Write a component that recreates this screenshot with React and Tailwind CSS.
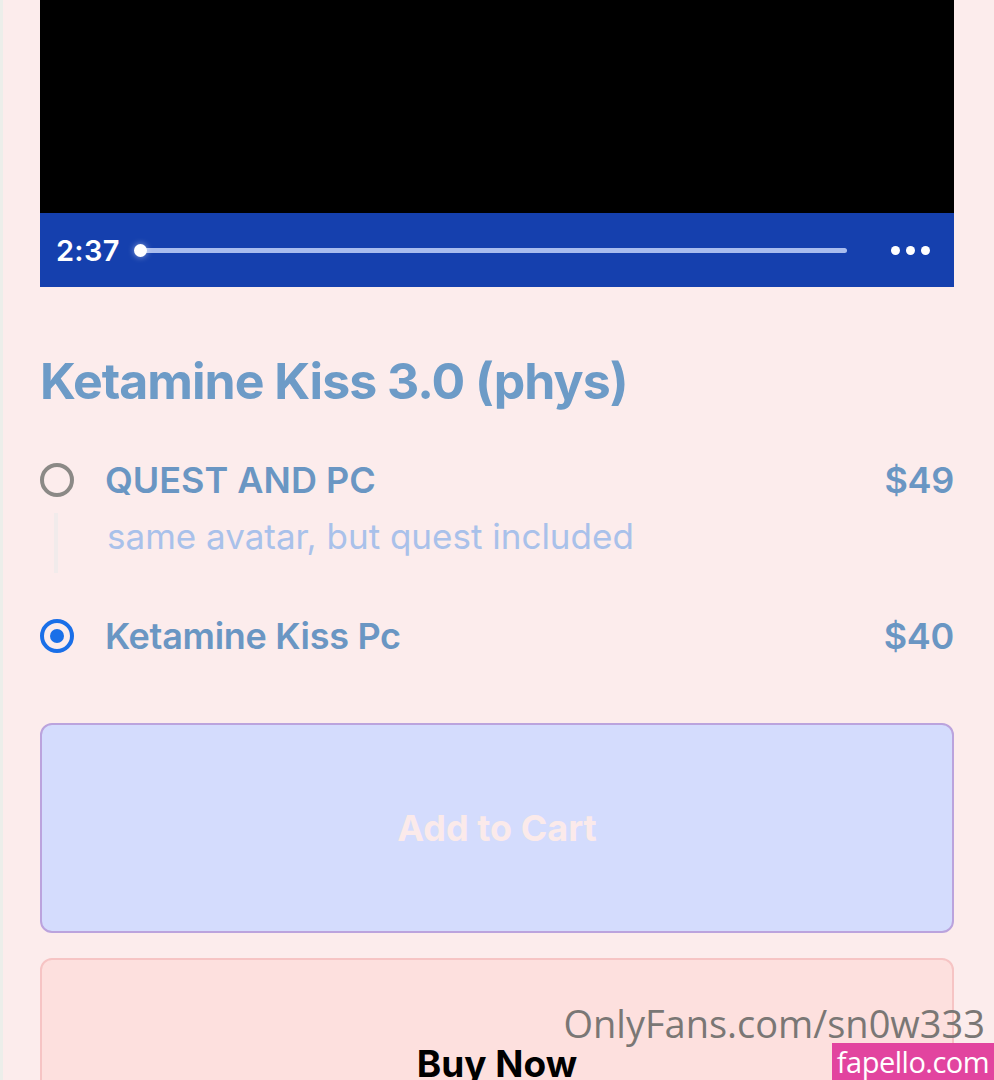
import React from "react";

export default function App() {
  return (
    <div className="relative w-[994px] h-[1080px] overflow-hidden bg-[#fcecec] flex items-start" style={{ fontFamily: "Inter, 'Noto Sans', sans-serif" }}>
      <div className="w-[3px] h-[1080px] bg-[#eceeea] shrink-0" />
      <div className="flex-1 pl-[37px] pr-[40px]">
        {/* video */}
        <div className="h-[213px] bg-black" />
        <div className="h-[74px] bg-[#1540ae] flex items-center pl-[16px] pr-[24px]">
          <span className="text-white text-[29px] font-semibold leading-none tracking-[0.3px]">2:37</span>
          <div className="relative flex-1 ml-[20px] mr-[44px] h-[5px] rounded-full bg-[#a9bdee]">
            <div className="absolute left-[-6px] top-[-4px] w-[13px] h-[13px] rounded-full bg-white shadow-[0_0_6px_rgba(255,255,255,0.5)]" />
          </div>
          <div className="flex gap-[6px]">
            <span className="w-[9px] h-[9px] rounded-full bg-white" />
            <span className="w-[9px] h-[9px] rounded-full bg-white" />
            <span className="w-[9px] h-[9px] rounded-full bg-white" />
          </div>
        </div>

        {/* title */}
        <h1 className="mt-[64px] text-[50px] font-bold leading-[60px] text-[#6d9bc7] tracking-[-1px]">
          Ketamine Kiss 3.0 (phys)
        </h1>

        {/* option 1 */}
        <div className="mt-[49px] flex items-center h-[40px]">
          <div className="w-[34px] h-[34px] rounded-full border-[4px] border-[#8b8986]" />
          <span className="ml-[31px] text-[36px] font-semibold text-[#6a96c3] tracking-[0px]">QUEST AND PC</span>
          <span className="ml-auto text-[36px] font-semibold text-[#6a96c3] tracking-[-0.3px]">$49</span>
        </div>
        <div className="flex mt-[13px]">
          <div className="ml-[14px] w-[4px] h-[60px] bg-[#f1ebeb]" />
          <span className="ml-[49px] mt-[3px] h-[40px] text-[35px] text-[#a9c1ea] leading-[40px]">same avatar, but quest included</span>
        </div>

        {/* option 2 */}
        <div className="mt-[43px] flex items-center h-[40px]">
          <div className="w-[34px] h-[34px] rounded-full border-[4px] border-[#1a6fe8] flex items-center justify-center">
            <div className="w-[14px] h-[14px] rounded-full bg-[#1a6fe8]" />
          </div>
          <span className="ml-[31px] text-[36px] font-semibold text-[#6a96c3] tracking-[-0.3px]">Ketamine Kiss Pc</span>
          <span className="ml-auto text-[36px] font-semibold text-[#6a96c3] tracking-[-0.3px]">$40</span>
        </div>

        {/* buttons */}
        <div className="mt-[67px] h-[210px] rounded-[12px] border-2 border-[#bba3dd] bg-[#d4dcfd] flex items-center justify-center">
          <span className="text-[36px] font-bold text-[#fbeaea]">Add to Cart</span>
        </div>
        <div className="mt-[25px] h-[160px] rounded-[12px] border-2 border-[#f6c4c4] bg-[#fde0de] flex justify-center">
          <span className="mt-[76px] text-[37px] font-bold text-black">Buy Now</span>
        </div>
      </div>

      {/* watermarks */}
      <div className="absolute right-[9px] top-[999px] text-[38px] leading-[48px] text-[#7a7775]" style={{ fontFamily: "'Open Sans', sans-serif" }}>
        OnlyFans.com/sn0w333
      </div>
      <div className="absolute right-0 top-[1043px] w-[162px] h-[37px] bg-[#e2449f] flex items-center justify-center text-white text-[29px] leading-none tracking-[-0.5px]" style={{ fontFamily: "'Open Sans', sans-serif" }}>
        fapello.com
      </div>
    </div>
  );
}
